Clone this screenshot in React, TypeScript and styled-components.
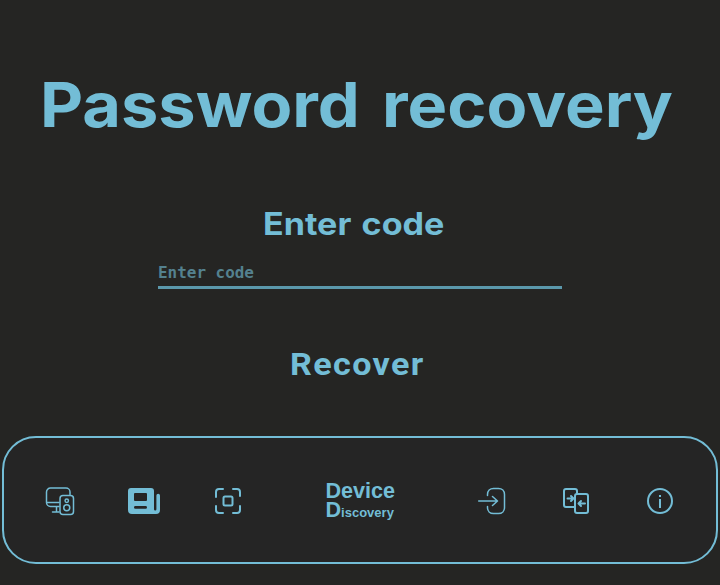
import React from "react";
import styled, { createGlobalStyle } from "styled-components";

const accent = "#73bdd6";

const GlobalStyle = createGlobalStyle`
  * { box-sizing: border-box; }
  html, body { margin: 0; background: #252523; overflow: hidden; }
`;

const Page = styled.main`
  width: 720px;
  height: 585px;
  display: flex;
  flex-direction: column;
  color: ${accent};
  background: #252523;
`;

const Heading = styled.h1`
  margin: 66px 0 0 40px;
  width: max-content;
  height: 78px;
  font: 700 62px/78px Inter, sans-serif;
  word-spacing: 6px;
  white-space: nowrap;
  transform-origin: 0 50%;
  transform: scaleX(1.075);
`;

const Form = styled.form`
  display: flex;
  flex-direction: column;
  width: 404px;
  margin: 60px 0 0 158px;
`;

const Label = styled.label`
  height: 39px;
  width: max-content;
  margin-left: 105px;
  font: 700 31px/39px Inter, sans-serif;
  word-spacing: 2px;
  white-space: nowrap;
  transform-origin: 0 50%;
  transform: scaleX(1.1);
`;

const CodeInput = styled.input`
  height: 32px;
  margin-top: 14px;
  padding: 1px 0 0;
  border: 0;
  border-bottom: 3px solid #5b98ab;
  outline: 0;
  background: transparent;
  color: ${accent};
  font: 700 15.95px "DejaVu Sans Mono", monospace;
  &::placeholder { color: #54818f; opacity: 1; }
`;

const RecoverButton = styled.button`
  align-self: flex-start;
  margin: 54px 0 0 132px;
  padding: 0;
  height: 42px;
  border: 0;
  background: transparent;
  color: ${accent};
  font: 700 32px/42px Roboto, sans-serif;
  letter-spacing: 1.3px;
  transform-origin: 0 50%;
  transform: scaleX(1.065);
`;

const Nav = styled.nav`
  display: flex;
  align-items: center;
  height: 128px;
  margin: auto 2px 21px;
  padding: 0 14px;
  border: 2px solid ${accent};
  border-radius: 34px;
  background: #252525;
`;

const NavItem = styled.a`
  display: flex;
  justify-content: center;
  width: 84px;
  padding-top: 2px;
`;

const Icon = styled.svg`
  display: block;
  width: 36px;
  height: 36px;
  fill: none;
  stroke: ${accent};
  stroke-linecap: round;
  stroke-linejoin: round;
`;

const Logo = styled.div`
  flex: 1;
  padding-left: 55.5px;
  font: 700 21.6px/19px "Liberation Sans", Arial, sans-serif;
  white-space: nowrap;
`;

const LogoLine = styled.div`
  height: 19px;
`;

const Small = styled.span`
  font-size: 13px;
`;

export default function App() {
  return (
    <>
      <GlobalStyle />
      <Page>
        <Heading>Password recovery</Heading>
        <Form>
          <Label htmlFor="code">Enter code</Label>
          <CodeInput id="code" placeholder="Enter code" />
          <RecoverButton type="button">Recover</RecoverButton>
        </Form>
        <Nav>
          <NavItem>
            <Icon viewBox="0 0 36 36" strokeWidth="1.5">
              <path d="M17 23.5H8.5a4 4 0 0 1-4-4V9a4 4 0 0 1 4-4H24a4 4 0 0 1 4 4v2.5M4.5 19.5H17M10.5 29H17M14.5 24v5" />
              <rect x="18" y="12.5" width="13.5" height="19" rx="3" />
              <circle cx="24.75" cy="17.7" r="1.7" />
              <circle cx="24.75" cy="24.7" r="3" />
            </Icon>
          </NavItem>
          <NavItem>
            <Icon viewBox="0 0 36 36">
              <path fill={accent} stroke="none" fillRule="evenodd" d="M5 5h20a3 3 0 0 1 3 3v18.2a1.2 1.2 0 0 0 2.4 0V12.5a1.8 1.8 0 0 1 3.6 0V27a4 4 0 0 1-4 4H6a4 4 0 0 1-4-4V8a3 3 0 0 1 3-3Zm4 5a1 1 0 0 0-1 1v6a1 1 0 0 0 1 1h11a1 1 0 0 0 1-1v-6a1 1 0 0 0-1-1Zm.4 13a1.4 1.4 0 0 0 0 2.8h10.2a1.4 1.4 0 0 0 0-2.8Z" />
            </Icon>
          </NavItem>
          <NavItem>
            <Icon viewBox="0 0 36 36" strokeWidth="2">
              <path d="M6 14V9a3 3 0 0 1 3-3h4M23 6h4a3 3 0 0 1 3 3v4M30 23v4a3 3 0 0 1-3 3h-4M13 30H9a3 3 0 0 1-3-3v-4" />
              <rect x="13.5" y="13.5" width="9" height="9" rx="1.5" />
            </Icon>
          </NavItem>
          <Logo>
            <LogoLine>Device</LogoLine>
            <LogoLine>D<Small>iscovery</Small></LogoLine>
          </Logo>
          <NavItem>
            <Icon viewBox="0 0 36 36" strokeWidth="1.5">
              <path d="M13.5 12.5v-1C13.5 8 16 5.4 19.5 5.4h5c3.5 0 6 2.6 6 6.1v13c0 3.5-2.5 6.1-6 6.1h-5c-3.5 0-6-2.6-6-6.1v-1M4.7 18H23M18.5 13.5l5 4.5-5 4.5" />
            </Icon>
          </NavItem>
          <NavItem>
            <Icon viewBox="0 0 36 36" strokeWidth="2">
              <path d="M16.5 24H8a2 2 0 0 1-2-2V8a2 2 0 0 1 2-2h9a2 2 0 0 1 2 2v2M9.5 15.500h6M13 13l2.500 2.500L13 18M27 20.500h-6M23 18l-2.500 2.500L23 23" />
              <rect x="17" y="11" width="13" height="19" rx="2" />
            </Icon>
          </NavItem>
          <NavItem>
            <Icon viewBox="0 0 36 36" strokeWidth="2">
              <circle cx="18" cy="18" r="12" />
              <path strokeLinecap="butt" d="M18 16v9M18 12v2" />
            </Icon>
          </NavItem>
        </Nav>
      </Page>
    </>
  );
}
